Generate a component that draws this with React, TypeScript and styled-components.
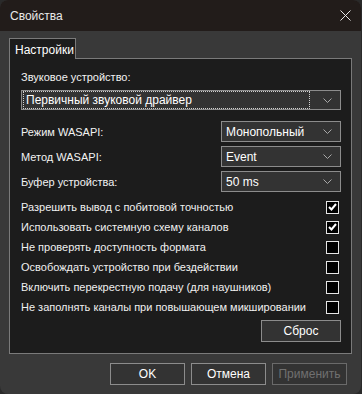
import React from "react";
import styled, { createGlobalStyle } from "styled-components";

const Global = createGlobalStyle`
  html, body { margin: 0; padding: 0; background: #2a2a2a; }
  * { box-sizing: border-box; }
  body { font-family: "Liberation Sans", Arial, sans-serif; font-size: 11px; color: #f0f0f0; }
`;

const Window = styled.div`
  width: 361px;
  height: 394px;
  background: #393939;
  border-radius: 8px;
  overflow: hidden;
  display: flex;
  flex-direction: column;
`;

const TitleBar = styled.div`
  height: 31px;
  background: #221c1a;
  display: flex;
  align-items: center;
  justify-content: space-between;
  padding: 0 10px 0 10px;
  font-size: 12px;
  color: #e8e8e8;
`;

const Body = styled.div`
  flex: 1;
  display: flex;
  flex-direction: column;
  padding: 7px 9px 0 9px;
`;

const TabStrip = styled.div`
  display: flex;
  height: 20px;
`;

const Tab = styled.div`
  width: 67px;
  height: 21px;
  border: 1px solid #7a7a7a;
  border-bottom: none;
  background: #1c1c1c;
  padding: 4px 0 0 5px;
  position: relative;
  z-index: 1;
  color: #ffffff;
  font-size: 12px;
`;

const Panel = styled.div`
  width: 343px;
  height: 296px;
  border: 1px solid #7a7a7a;
  background: #1c1c1c;
  display: flex;
  flex-direction: column;
  padding: 11px 10px 0 11px;
`;

const Label = styled.div`
  height: 14px;
  line-height: 14px;
  color: #f2f2f2;
  white-space: nowrap;
`;

const Combo = styled.div<{ $w?: number; $h?: number }>`
  width: ${(p) => (p.$w ? `${p.$w}px` : "100%")};
  height: ${(p) => p.$h ?? 21}px;
  border: 1px solid #8c8c8c;
  background: #333333;
  display: flex;
  align-items: center;
  padding: 0 8px 0 2px;
  color: #ffffff;
  font-size: 12px;
`;

const ComboText = styled.div<{ $focus?: boolean }>`
  flex: 1;
  height: 16px;
  line-height: 16px;
  padding-left: 2px;
  ${(p) => (p.$focus ? "outline: 1px dotted #d0d0d0; outline-offset: 0; margin-right: 14px;" : "")}
`;

const Chevron = () => (
  <svg width="9" height="5" viewBox="0 0 9 5">
    <path d="M0.5 0.5 L4.5 4.5 L8.5 0.5" stroke="#a8a8a8" strokeWidth="1" fill="none" />
  </svg>
);

const SettingRow = styled.div<{ $mt: number }>`
  display: flex;
  align-items: center;
  justify-content: space-between;
  margin-top: ${(p) => p.$mt}px;
`;

const CheckRow = styled.div`
  height: 20px;
  display: flex;
  align-items: center;
  justify-content: space-between;
  padding-right: 2px;
  white-space: nowrap;
`;

const CheckList = styled.div`
  margin-top: 5px;
  display: flex;
  flex-direction: column;
`;

const Box = styled.div`
  width: 13px;
  height: 13px;
  border: 1px solid #e6e6e6;
  background: #000;
  display: flex;
  align-items: center;
  justify-content: center;
`;

const Button = styled.div<{ $disabled?: boolean; $w?: number }>`
  width: ${(p) => p.$w ?? 75}px;
  height: 22px;
  border: 1px solid ${(p) => (p.$disabled ? "#6a6a6a" : "#8c8c8c")};
  background: #333333;
  color: ${(p) => (p.$disabled ? "#707070" : "#ffffff")};
  display: flex;
  align-items: center;
  justify-content: center;
  font-size: 12px;
`;

const ResetRow = styled.div`
  display: flex;
  justify-content: flex-end;
  margin-top: 3px;
`;

const Footer = styled.div`
  display: flex;
  justify-content: flex-end;
  gap: 6px;
  margin-top: 9px;
  padding-right: 5px;
`;

const Check = ({ on }: { on: boolean }) => (
  <Box>
    {on && (
      <svg width="9" height="8" viewBox="0 0 9 8">
        <path d="M1 4 L3.5 6.5 L8 1" stroke="#ffffff" strokeWidth="2" fill="none" />
      </svg>
    )}
  </Box>
);

const checks: [string, boolean][] = [
  ["Разрешить вывод с побитовой точностью", true],
  ["Использовать системную схему каналов", true],
  ["Не проверять доступность формата", false],
  ["Освобождать устройство при бездействии", false],
  ["Включить перекрестную подачу (для наушников)", false],
  ["Не заполнять каналы при повышающем микшировании", false],
];

export default function App() {
  return (
    <Window>
      <Global />
      <TitleBar>
        <span>Свойства</span>
        <svg width="11" height="11" viewBox="0 0 11 11">
          <path d="M0.5 0.5 L10.5 10.5 M10.5 0.5 L0.5 10.5" stroke="#e8e8e8" strokeWidth="1" />
        </svg>
      </TitleBar>
      <Body>
        <TabStrip>
          <Tab>Настройки</Tab>
        </TabStrip>
        <Panel>
          <Label>Звуковое устройство:</Label>
          <SettingRow $mt={6}>
            <Combo $h={20}>
              <ComboText $focus>Первичный звуковой драйвер</ComboText>
              <Chevron />
            </Combo>
          </SettingRow>
          <SettingRow $mt={11}>
            <Label>Режим WASAPI:</Label>
            <Combo $w={120}>
              <ComboText>Монопольный</ComboText>
              <Chevron />
            </Combo>
          </SettingRow>
          <SettingRow $mt={4}>
            <Label>Метод WASAPI:</Label>
            <Combo $w={120}>
              <ComboText>Event</ComboText>
              <Chevron />
            </Combo>
          </SettingRow>
          <SettingRow $mt={4}>
            <Label>Буфер устройства:</Label>
            <Combo $w={120}>
              <ComboText>50 ms</ComboText>
              <Chevron />
            </Combo>
          </SettingRow>
          <CheckList>
            {checks.map(([t, on]) => (
              <CheckRow key={t}>
                <span>{t}</span>
                <Check on={on} />
              </CheckRow>
            ))}
          </CheckList>
          <ResetRow>
            <Button $w={80}>Сброс</Button>
          </ResetRow>
        </Panel>
        <Footer>
          <Button>OK</Button>
          <Button>Отмена</Button>
          <Button $disabled>Применить</Button>
        </Footer>
      </Body>
    </Window>
  );
}
